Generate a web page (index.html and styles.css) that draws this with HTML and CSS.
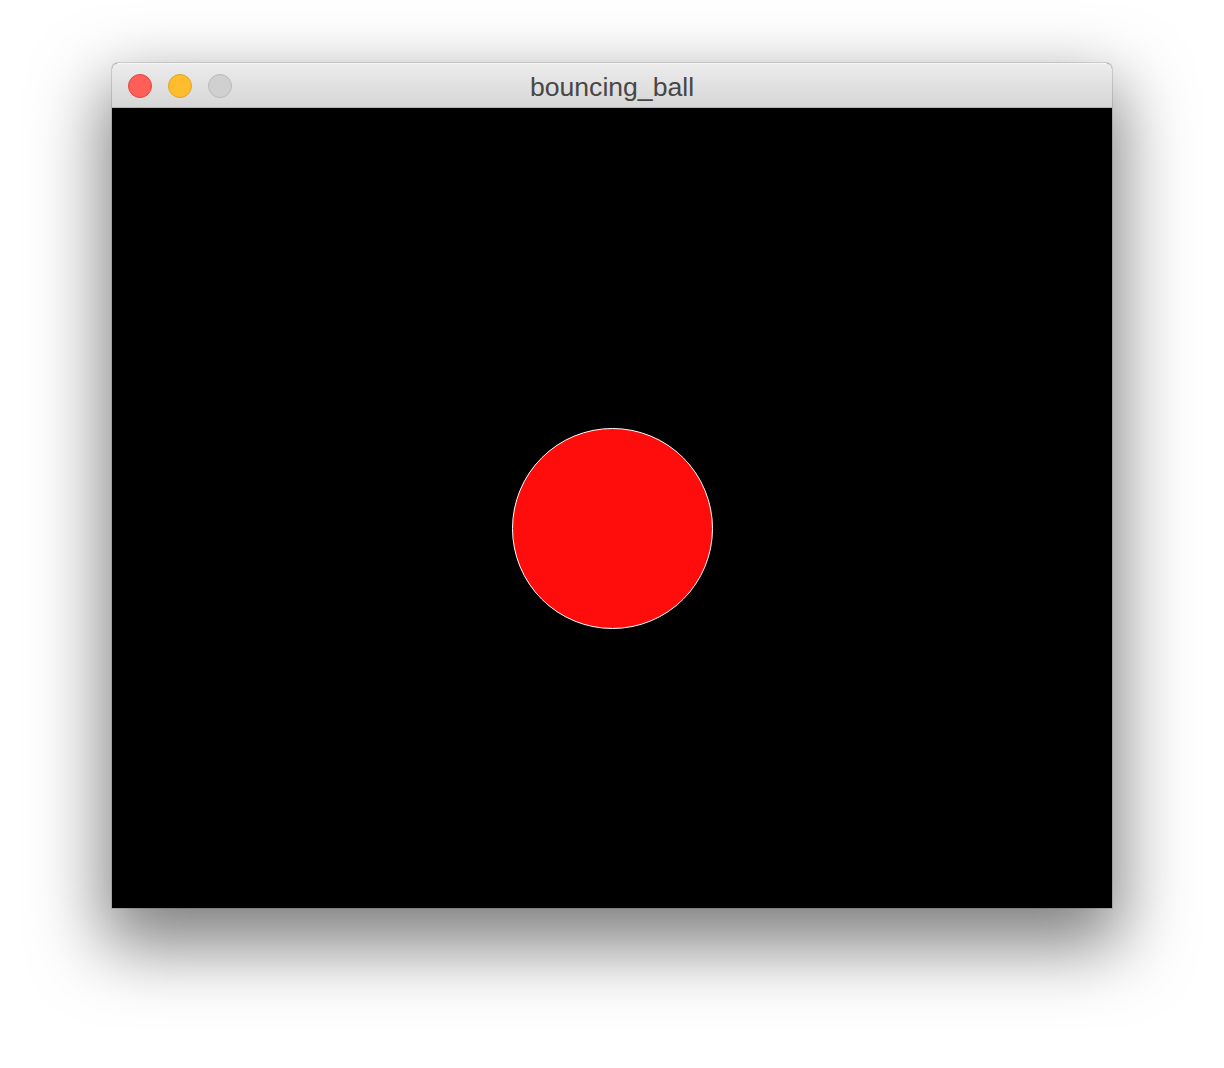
FILE: index.html
```html
<!DOCTYPE html>
<html>
<head>
<meta charset="utf-8">
<link rel="stylesheet" href="styles.css">
</head>
<body>
<div class="stage">
  <div class="window">
    <div class="titlebar">
      <div class="lights">
        <span class="light close"></span>
        <span class="light min"></span>
        <span class="light max"></span>
      </div>
      <div class="title">bouncing_ball</div>
    </div>
    <div class="canvas">
      <div class="ball"></div>
    </div>
  </div>
</div>
</body>
</html>
```
FILE: styles.css
```css
html, body {
  margin: 0;
  padding: 0;
  background: #ffffff;
}
.stage {
  width: 1224px;
  height: 1068px;
  padding: 63px 0 0 112px;
  box-sizing: border-box;
  overflow: hidden;
}
.window {
  width: 1000px;
  border-radius: 6px 6px 0 0;
  box-shadow: 0 0 0 1px rgba(0,0,0,0.12), 0 30px 70px 8px rgba(0,0,0,0.5);
  background: #000;
}
.titlebar {
  position: relative;
  height: 45px;
  box-sizing: border-box;
  border-radius: 6px 6px 0 0;
  background: linear-gradient(#ececec, #d6d6d6);
  border-top: 1px solid #f6f6f6;
  border-bottom: 1px solid #b2b2b2;
  display: flex;
  align-items: center;
  justify-content: center;
}
.lights {
  position: absolute;
  left: 16px;
  top: 10px;
  display: flex;
  gap: 16px;
}
.light {
  width: 24px;
  height: 24px;
  border-radius: 50%;
  box-sizing: border-box;
}
.close { background: #ff5f57; border: 1px solid #e2463f; }
.min { background: #ffbd2e; border: 1px solid #e0a228; }
.max { background: #d0d0d0; border: 1px solid #bababa; }
.title {
  font-family: "Liberation Sans", Arial, sans-serif;
  font-size: 26.6px;
  color: #474747;
  margin-top: 3px;
}
.canvas {
  height: 800px;
  background: #000;
  display: flex;
  justify-content: center;
  align-items: flex-start;
  padding-top: 320px;
  box-sizing: border-box;
}
.ball {
  width: 201px;
  height: 201px;
  box-sizing: border-box;
  border-radius: 50%;
  background: #ff0c0c;
  border: 1.5px solid #ffffff;
}
```
